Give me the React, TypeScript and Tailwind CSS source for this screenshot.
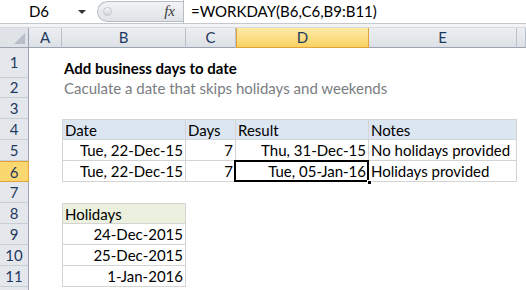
import React from "react";

const font = { fontFamily: "Lato, 'Open Sans', sans-serif" };

const RowHead = ({ n, active }: { n?: number; active?: boolean }) => (
  <div
    className={
      active
        ? "w-[29px] shrink-0 h-full flex items-center justify-center text-[15px] text-[#1f3a5f] bg-[#fbd770] border-y border-r border-[#e2a23c]"
        : "w-[29px] shrink-0 h-full flex items-center justify-center text-[15px] text-[#1f3a5f] bg-[#e4e7eb] border-b border-r border-b-[#c9ced5] border-r-[#9aa4b0]"
    }
  >
    {n}
  </div>
);

const ColHead = ({ label, w, active }: { label: string; w: string; active?: boolean }) => (
  <div
    className={`${w} shrink-0 h-full flex items-center justify-center text-[15px] text-[#1f3a5f] ${
      active
        ? "bg-gradient-to-b from-[#fdeaa6] to-[#f9d262] border-x border-b border-[#e2a23c]"
        : "bg-gradient-to-b from-[#eceef1] to-[#dde1e6] border-r border-b border-r-[#b9c1cb] border-b-[#9aa4b0]"
    }`}
  >
    {label}
  </div>
);

export default function App() {
  return (
    <div className="w-[526px] h-[290px] overflow-hidden bg-white text-black" style={font}>
      {/* formula bar */}
      <div className="h-[24px] flex items-stretch border-b border-[#c3c8cf] bg-white">
        <div className="w-[97px] shrink-0 relative flex items-center">
          <span className="w-[78px] text-center text-[15px]">D6</span>
          <span className="w-0 h-0 border-x-[4px] border-x-transparent border-t-[4px] border-t-[#333]" />
        </div>
        <div className="w-[86px] shrink-0 my-[1px] rounded-l-full bg-gradient-to-b from-[#f1f3f5] to-[#dfe3e7] border border-r-0 border-[#b5bcc5] flex items-center justify-between pl-[5px] pr-[8px]">
          <span className="w-[9px] h-[9px] rounded-full bg-gradient-to-b from-[#f7f8f9] to-[#cfd4d9] border border-[#c3c8ce]" />
          <span className="text-[15px] italic text-[#3a3a3a]" style={{ fontFamily: "'Liberation Serif', serif" }}>
            fx
          </span>
        </div>
        <div className="flex-1 border-l border-[#b5bcc5] flex items-center pl-[7px] text-[15px]">=WORKDAY(B6,C6,B9:B11)</div>
      </div>
      <div className="h-[4px] bg-[#f2f4f6] border-b border-[#d5d9de]" />

      {/* column headers */}
      <div className="h-[20px] flex">
        <div className="w-[29px] shrink-0 h-full bg-[#dfe3e8] border-r border-b border-[#9aa4b0] relative">
          <div className="absolute right-[3px] bottom-[3px] w-0 h-0 border-l-[11px] border-l-transparent border-b-[11px] border-b-[#b7bec7]" />
        </div>
        <ColHead label="A" w="w-[33px]" />
        <ColHead label="B" w="w-[124px]" />
        <ColHead label="C" w="w-[50px]" />
        <ColHead label="D" w="w-[133px]" active />
        <ColHead label="E" w="w-[148px]" />
        <ColHead label="" w="flex-1" />
      </div>

      {/* row 1 */}
      <div className="h-[30px] flex">
        <RowHead n={1} />
        <div className="w-[33px] shrink-0" />
        <div className="pl-[2px] pt-[9px] text-[15px] font-bold whitespace-nowrap">Add business days to date</div>
      </div>
      {/* row 2 */}
      <div className="h-[20px] flex">
        <RowHead n={2} />
        <div className="w-[33px] shrink-0" />
        <div className="pl-[2px] text-[15px] leading-[20px] text-[#7a7d82] whitespace-nowrap">
          Caculate a date that skips holidays and weekends
        </div>
      </div>
      {/* row 3 */}
      <div className="h-[21px] flex">
        <RowHead n={3} />
      </div>

      {/* row 4 table header */}
      <div className="h-[21px] flex text-[15px] leading-[20px]">
        <RowHead n={4} />
        <div className="w-[33px] shrink-0" />
        <div className="w-[124px] shrink-0 bg-[#dce6f1] border border-[#d4d4d4] pl-[2px]">Date</div>
        <div className="w-[50px] shrink-0 bg-[#dce6f1] border-y border-r border-[#d4d4d4] pl-[2px]">Days</div>
        <div className="w-[133px] shrink-0 bg-[#dce6f1] border-y border-r border-[#d4d4d4] pl-[2px]">Result</div>
        <div className="w-[148px] shrink-0 bg-[#dce6f1] border-y border-r border-[#d4d4d4] pl-[2px]">Notes</div>
      </div>
      {/* row 5 */}
      <div className="h-[21px] flex text-[15px] leading-[20px]">
        <RowHead n={5} />
        <div className="w-[33px] shrink-0" />
        <div className="w-[124px] shrink-0 border-x border-b border-[#d4d4d4] pr-[2px] text-right">Tue, 22-Dec-15</div>
        <div className="w-[50px] shrink-0 border-r border-b border-[#d4d4d4] pr-[2px] text-right">7</div>
        <div className="w-[133px] shrink-0 border-r border-b border-[#d4d4d4] pr-[2px] text-right">Thu, 31-Dec-15</div>
        <div className="w-[148px] shrink-0 border-r border-b border-[#d4d4d4] pl-[2px] whitespace-nowrap">No holidays provided</div>
      </div>
      {/* row 6 */}
      <div className="h-[21px] flex text-[15px] leading-[20px]">
        <RowHead n={6} active />
        <div className="w-[33px] shrink-0" />
        <div className="w-[124px] shrink-0 border-x border-b border-[#d4d4d4] pr-[2px] text-right">Tue, 22-Dec-15</div>
        <div className="w-[50px] shrink-0 border-r border-b border-[#d4d4d4] pr-[2px] text-right">7</div>
        <div className="w-[133px] shrink-0 border-r border-b border-[#d4d4d4] pr-[2px] text-right relative">
          Tue, 05-Jan-16
          <div className="absolute -left-[2px] -top-[1px] -right-[1px] -bottom-[1px] border-2 border-black" />
          <div className="absolute -right-[4px] -bottom-[4px] w-[5px] h-[5px] bg-black border border-white" />
        </div>
        <div className="w-[148px] shrink-0 border-r border-b border-[#d4d4d4] pl-[2px] whitespace-nowrap">Holidays provided</div>
      </div>
      {/* row 7 */}
      <div className="h-[21px] flex">
        <RowHead n={7} />
      </div>
      {/* row 8 */}
      <div className="h-[21px] flex text-[15px] leading-[20px]">
        <RowHead n={8} />
        <div className="w-[33px] shrink-0" />
        <div className="w-[124px] shrink-0 bg-[#ebf1de] border border-[#d4d4d4] pl-[2px]">Holidays</div>
      </div>
      {[
        [9, "24-Dec-2015"],
        [10, "25-Dec-2015"],
        [11, "1-Jan-2016"],
      ].map(([n, d]) => (
        <div key={n} className="h-[21px] flex text-[15px] leading-[20px]">
          <RowHead n={n as number} />
          <div className="w-[33px] shrink-0" />
          <div className="w-[124px] shrink-0 border-x border-b border-[#d4d4d4] pr-[2px] text-right">{d}</div>
        </div>
      ))}
      <div className="h-[21px] flex">
        <RowHead />
      </div>
    </div>
  );
}
